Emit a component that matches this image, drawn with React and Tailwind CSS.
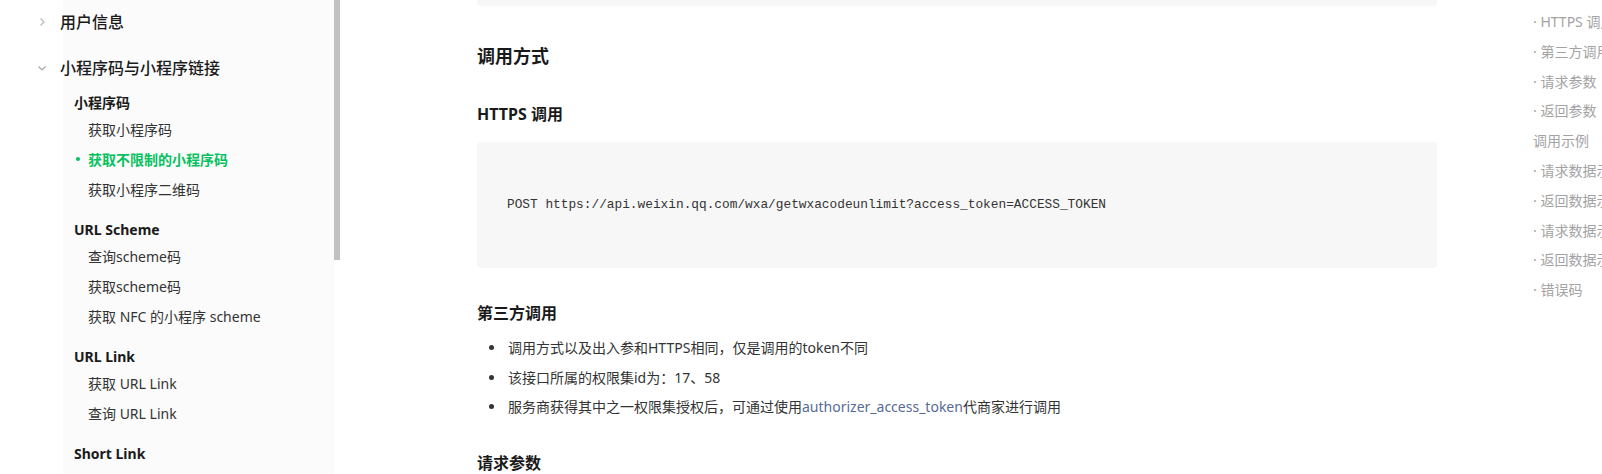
import React from 'react';

const FONT = '"Noto Sans", "Noto Sans CJK SC", sans-serif';

const GROUPS = [
  { title: '小程序码', items: ['获取小程序码', '获取不限制的小程序码', '获取小程序二维码'], active: 1 },
  { title: 'URL Scheme', items: ['查询scheme码', '获取scheme码', '获取 NFC 的小程序 scheme'] },
  { title: 'URL Link', items: ['获取 URL Link', '查询 URL Link'] },
  { title: 'Short Link', items: [] },
];

const TOC = [
  { label: 'HTTPS 调用', sub: true },
  { label: '第三方调用', sub: true },
  { label: '请求参数', sub: true },
  { label: '返回参数', sub: true },
  { label: '调用示例', sub: false },
  { label: '请求数据示例', sub: true },
  { label: '返回数据示例', sub: true },
  { label: '请求数据示例', sub: true },
  { label: '返回数据示例', sub: true },
  { label: '错误码', sub: true },
];

function Chevron({ open }) {
  return (
    <svg width="12" height="12" viewBox="0 0 12 12" className="shrink-0">
      {open ? (
        <path d="M2.5 4.5 L6 8 L9.5 4.5" fill="none" stroke="#a8a8a8" strokeWidth="1.2" />
      ) : (
        <path d="M4.5 2.5 L8 6 L4.5 9.5" fill="none" stroke="#b8b8b8" strokeWidth="1.2" />
      )}
    </svg>
  );
}

function Sidebar() {
  return (
    <div className="flex shrink-0 h-[474px]">
      <div className="w-[334px] h-full bg-[linear-gradient(to_right,#ffffff_63px,#fbfbfb_63px)]">
        {/* 用户信息 */}
        <div className="h-[44px] flex items-center pl-[36px] gap-[12px]">
          <Chevron />
          <span className="text-[16px] font-medium text-[#1a1a1a]">用户信息</span>
        </div>
        {/* 小程序码与小程序链接 */}
        <div className="h-[48px] flex items-center pl-[36px] gap-[12px]">
          <Chevron open />
          <span className="text-[16px] font-medium text-[#1a1a1a]">小程序码与小程序链接</span>
        </div>
        {GROUPS.map((g, gi) => (
          <div key={g.title} className={gi === 0 ? '' : 'mt-[15px]'}>
            <div className="pl-[74px] text-[14px] leading-[22px] font-bold text-[#1a1a1a]">{g.title}</div>
            {g.items.map((it, i) =>
              g.active === i ? (
                <div key={it} className="h-[30px] flex items-center pl-[76px] gap-[8px]">
                  <span className="w-[4px] h-[4px] rounded-full bg-[#07c160]" />
                  <span className="text-[14px] font-bold text-[#07c160]">{it}</span>
                </div>
              ) : (
                <div key={it} className="h-[30px] flex items-center pl-[88px] text-[14px] text-[#333333]">
                  {it}
                </div>
              )
            )}
          </div>
        ))}
      </div>
      {/* scrollbar */}
      <div className="w-[6px] h-full bg-white">
        <div className="h-[260px] bg-[#c1c1c1]" />
      </div>
    </div>
  );
}

function Main() {
  return (
    <div className="w-[960px] shrink-0 ml-[137px] text-[#333333]">
      <div className="h-[6px] rounded-b-[4px] bg-[#f7f7f7]" />
      <h2 className="mt-[37px] text-[18px] leading-[26px] font-bold text-[#1a1a1a]">调用方式</h2>
      <h3 className="mt-[33px] text-[16px] leading-[24px] font-bold text-[#1a1a1a]">HTTPS 调用</h3>
      <div className="mt-[16px] h-[126px] rounded-[4px] bg-[#f7f7f7] flex items-center pl-[30px]">
        <code
          className="text-[12.8px] leading-[20px] text-[#333333] whitespace-pre"
          style={{ fontFamily: '"Liberation Mono", monospace' }}
        >
          POST https://api.weixin.qq.com/wxa/getwxacodeunlimit?access_token=ACCESS_TOKEN
        </code>
      </div>
      <h3 className="mt-[33px] text-[16px] leading-[24px] font-bold text-[#1a1a1a]">第三方调用</h3>
      <ul className="mt-[8px] text-[14px] leading-[29.5px]">
        <li className="flex items-center">
          <span className="w-[5px] h-[5px] rounded-full bg-[#333333] ml-[12px] mr-[14px]" />
          调用方式以及出入参和HTTPS相同，仅是调用的token不同
        </li>
        <li className="flex items-center">
          <span className="w-[5px] h-[5px] rounded-full bg-[#333333] ml-[12px] mr-[14px]" />
          该接口所属的权限集id为：17、58
        </li>
        <li className="flex items-center">
          <span className="w-[5px] h-[5px] rounded-full bg-[#333333] ml-[12px] mr-[14px]" />
          <span>
            服务商获得其中之一权限集授权后，可通过使用<span className="text-[#576b95]">authorizer_access_token</span>代商家进行调用
          </span>
        </li>
      </ul>
      <h3 className="mt-[29px] text-[16px] leading-[24px] font-bold text-[#1a1a1a]">请求参数</h3>
    </div>
  );
}

function Toc() {
  return (
    <div className="ml-[96px] pt-[7px] text-[14px] leading-[29.8px] text-[#a3a3a3] whitespace-nowrap">
      {TOC.map((t, i) => (
        <div key={i}>{t.sub ? <span>· {t.label}</span> : t.label}</div>
      ))}
    </div>
  );
}

export default function App() {
  return (
    <div className="w-[1602px] h-[474px] overflow-hidden bg-white flex" style={{ fontFamily: FONT }}>
      <Sidebar />
      <Main />
      <Toc />
    </div>
  );
}
